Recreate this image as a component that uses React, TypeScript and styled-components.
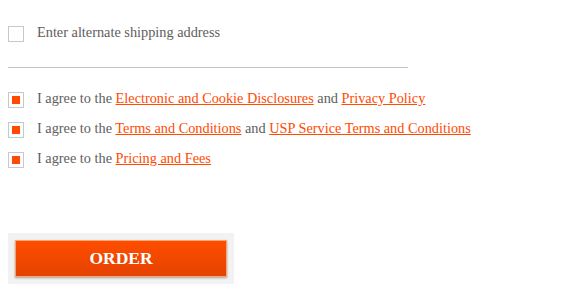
import React, { useState } from "react";
import styled, { createGlobalStyle } from "styled-components";

const GlobalStyle = createGlobalStyle`
  html, body {
    margin: 0;
    padding: 0;
    background: #fff;
  }
  body {
    font-family: "Liberation Serif", "Times New Roman", serif;
  }
`;

type Agreement = {
  id: string;
  parts: { text: string; link?: boolean }[];
};

const agreements: Agreement[] = [
  {
    id: "disclosures",
    parts: [
      { text: "I agree to the " },
      { text: "Electronic and Cookie Disclosures", link: true },
      { text: " and " },
      { text: "Privacy Policy", link: true },
    ],
  },
  {
    id: "terms",
    parts: [
      { text: "I agree to the " },
      { text: "Terms and Conditions", link: true },
      { text: " and " },
      { text: "USP Service Terms and Conditions", link: true },
    ],
  },
  {
    id: "pricing",
    parts: [
      { text: "I agree to the " },
      { text: "Pricing and Fees", link: true },
    ],
  },
];

const App = () => {
  const [alternate, setAlternate] = useState(false);
  const [checked, setChecked] = useState<Record<string, boolean>>({
    disclosures: true,
    terms: true,
    pricing: true,
  });

  return (
    <>
      <GlobalStyle />
      <Page>
        <Row>
          <Box $checked={alternate} onClick={() => setAlternate(!alternate)} />
          <Label>Enter alternate shipping address</Label>
        </Row>

        <Divider />

        <AgreementList>
          {agreements.map((a) => (
            <Row key={a.id}>
              <Box
                $checked={checked[a.id]}
                onClick={() =>
                  setChecked({ ...checked, [a.id]: !checked[a.id] })
                }
              />
              <Label>
                {a.parts.map((p, i) =>
                  p.link ? (
                    <Link key={i} href="#">
                      {p.text}
                    </Link>
                  ) : (
                    <span key={i}>{p.text}</span>
                  )
                )}
              </Label>
            </Row>
          ))}
        </AgreementList>

        <ButtonWell>
          <OrderButton type="button">ORDER</OrderButton>
        </ButtonWell>
      </Page>
    </>
  );
};

export default App;

const Page = styled.main`
  display: flex;
  flex-direction: column;
  align-items: flex-start;
  padding: 26px 8px 0;
`;

const Row = styled.div`
  display: flex;
  align-items: center;
  gap: 13px;
  height: 16px;
`;

const Box = styled.span<{ $checked?: boolean }>`
  box-sizing: border-box;
  display: flex;
  align-items: center;
  justify-content: center;
  flex: none;
  width: 16px;
  height: 16px;
  border: 1px solid #c8c8c8;
  background: #fff;
  cursor: pointer;

  &::after {
    content: "";
    display: ${({ $checked }) => ($checked ? "block" : "none")};
    width: 8px;
    height: 8px;
    background: #ff4a00;
  }
`;

const Label = styled.span`
  margin-bottom: 4px;
  color: #5e5e5e;
  font-size: 14.3px;
  line-height: 16px;
  white-space: nowrap;
`;

const Link = styled.a`
  color: #ff4a00;
  text-decoration: underline;
`;

const Divider = styled.hr`
  width: 400px;
  height: 0;
  margin: 25px 0 24px;
  border: 0;
  border-top: 1px solid #c4c4c4;
`;

const AgreementList = styled.div`
  display: flex;
  flex-direction: column;
  gap: 14px;
`;

const ButtonWell = styled.div`
  margin-top: 65px;
  padding: 7px;
  background: #f2f2f2;
`;

const OrderButton = styled.button`
  box-sizing: border-box;
  width: 212px;
  height: 37px;
  border: 1px solid #f7a66f;
  background: linear-gradient(#ff4d00, #e44300);
  box-shadow: 0 1px 2px rgba(0, 0, 0, 0.35);
  color: #fff;
  font-family: "Liberation Serif", "Times New Roman", serif;
  font-size: 17.5px;
  font-weight: bold;
  cursor: pointer;
`;
